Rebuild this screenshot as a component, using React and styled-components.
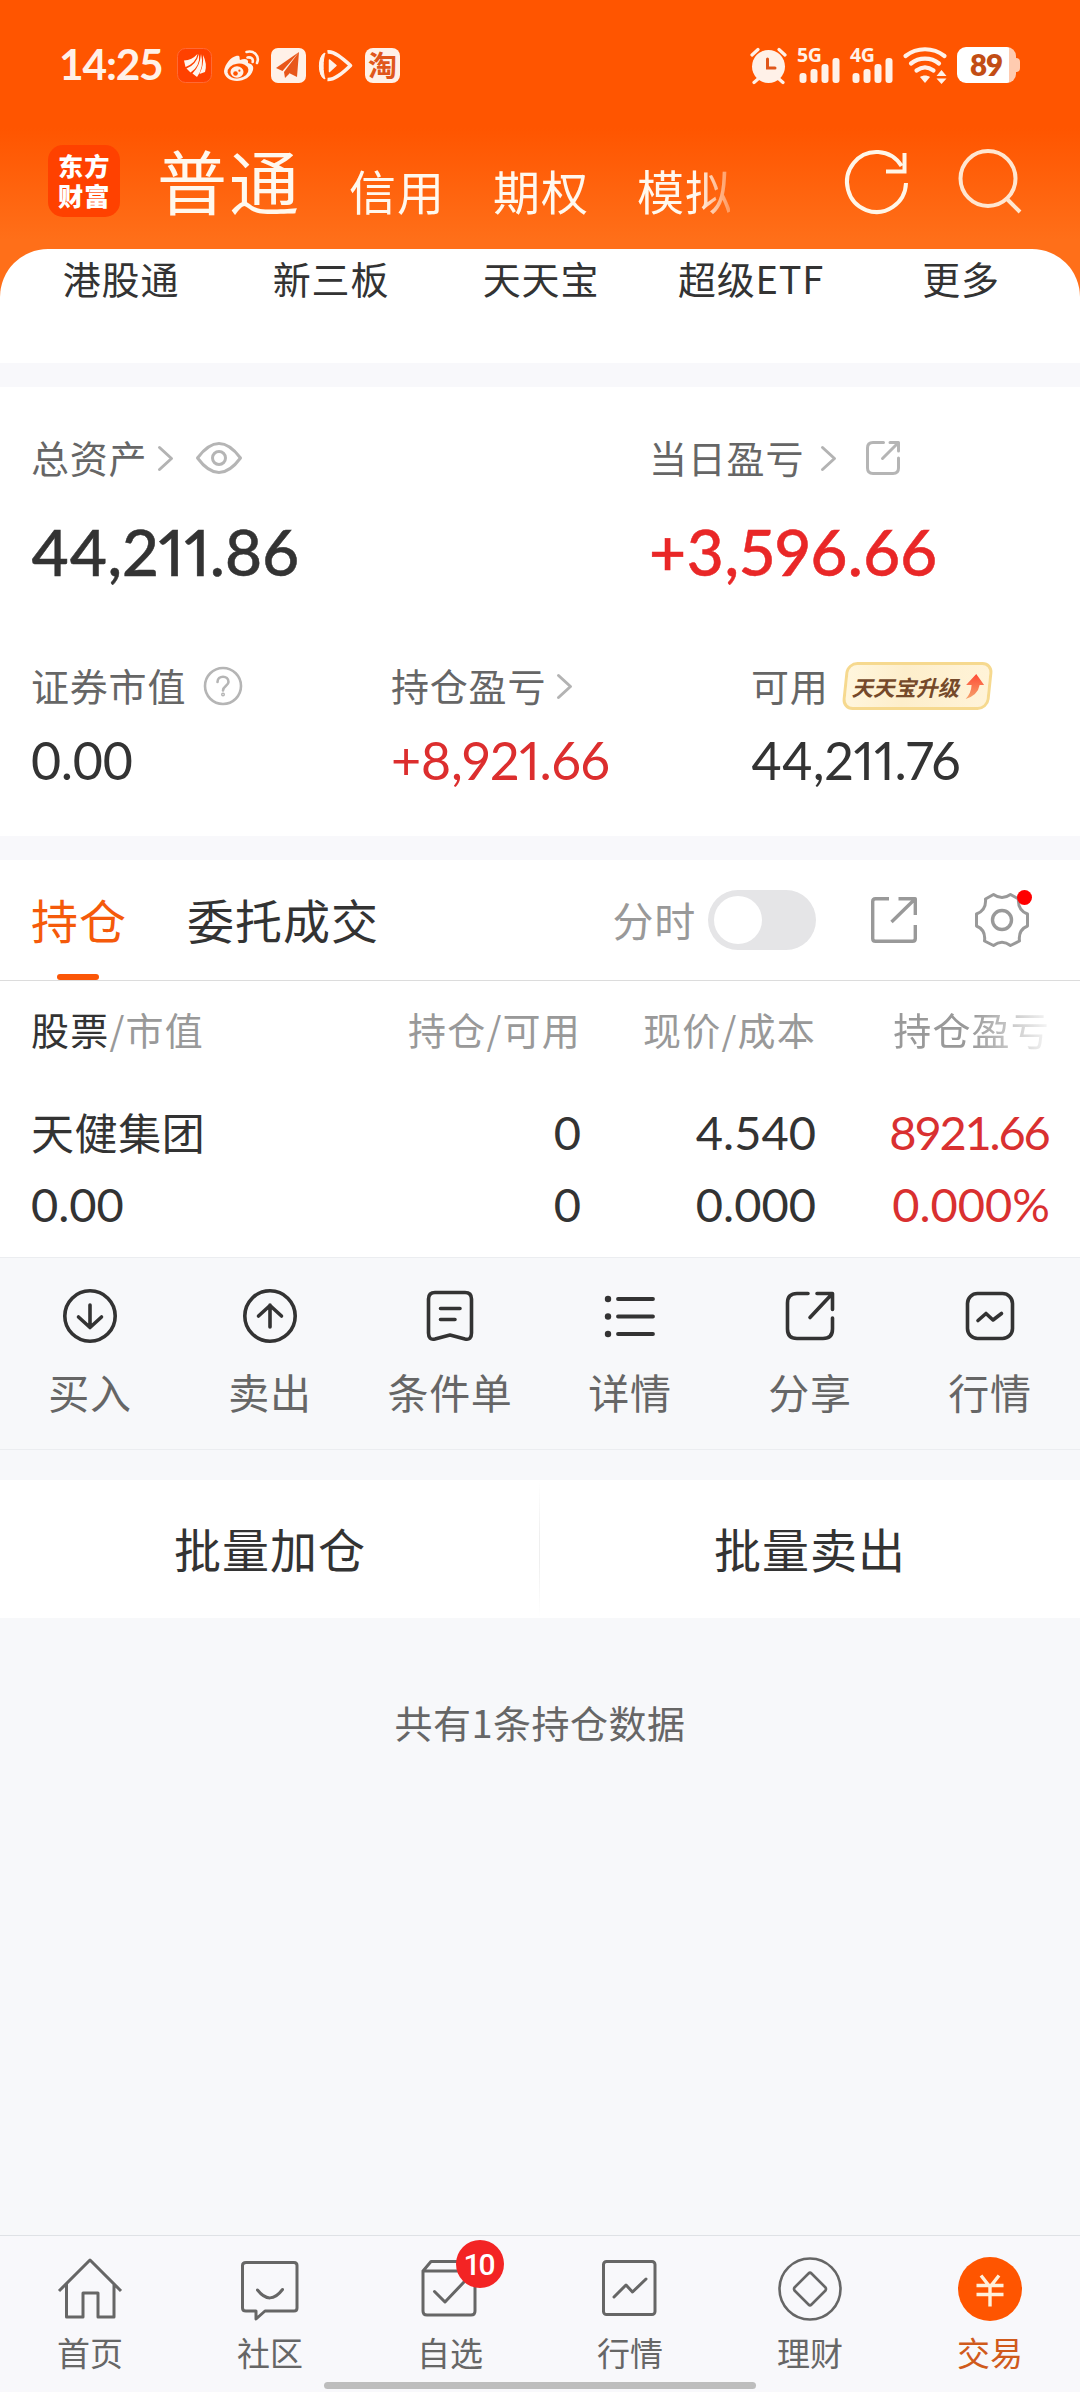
import React from 'react';
import styled, { createGlobalStyle, css } from 'styled-components';

const Global = createGlobalStyle`
  * { box-sizing: border-box; }
  body { margin: 0; background: #f7f8fa; }
  svg { display: block; flex: none; overflow: visible; }
`;

const cjk = `"Noto Sans CJK SC", "Noto Sans", sans-serif`;
const num = `Lato, "Noto Sans", "Noto Sans CJK SC", sans-serif`;

const Screen = styled.div`
  width: 1080px;
  height: 2392px;
  display: flex;
  flex-direction: column;
  overflow: hidden;
  background: #f7f8fa;
  color: #333;
  font-family: ${cjk};
  white-space: nowrap;
`;

const Top = styled.div`
  flex: none;
  background: linear-gradient(#ff5500 0, #ff5500 128px, #ff6f19 240px, #ff6f19 100%);
`;
const Header = styled.header`
  height: 249px;
  display: flex;
  flex-direction: column;
`;

const StatusBar = styled.div`
  height: 130px;
  padding: 0 60px 0 59px;
  display: flex;
  align-items: center;
`;
const Clock = styled.div`
  width: 118px;
  font: 700 42.5px/50px ${num};
  color: #fff1e8;
  letter-spacing: -1.2px;
  margin-top: -2px;
`;
const Apps = styled.div`
  display: flex;
  gap: 12px;
  flex: 1;
`;
const Tile = styled.span`
  width: 35px;
  height: 35px;
  border-radius: 8px;
  background: #fff1e8;
  color: #e0561a;
  font: 700 29px/33px ${cjk};
  text-align: center;
`;
const Indicators = styled.div`
  display: flex;
  align-items: center;
`;
const Signal = styled.div`
  width: 42px;
  height: 36px;
  margin-left: ${p => p.$gap}px;
  position: relative;
`;
const Net = styled.span`
  position: absolute;
  left: -2px;
  top: -2px;
  font: 700 19.5px/20px "Open Sans", sans-serif;
  letter-spacing: -0.5px;
  color: #fff1e8;
`;
const Battery = styled.div`
  width: 59px;
  height: 36px;
  margin-left: 9px;
  margin-right: 4px;
  padding-right: 1px;
  border-radius: 9px;
  background: linear-gradient(90deg, #fff 0 52px, #ffcbb0 52px);
  display: flex;
  justify-content: center;
  align-items: center;
  font: 800 29.5px/36px ${num};
  letter-spacing: -1px;
  color: #c24d14;
  position: relative;
  &::after {
    content: '';
    position: absolute;
    right: -4px;
    top: 11px;
    width: 4px;
    height: 14px;
    border-radius: 0 4px 4px 0;
    background: #ffcbb0;
  }
`;

const TitleBar = styled.div`
  height: 119px;
  padding: 15px 58px 0 48px;
  display: flex;
`;
const Logo = styled.div`
  width: 72px;
  height: 72px;
  border-radius: 15px;
  background: #ff4100;
  color: #fff;
  font: 900 25.2px/30px "Liberation Sans", "Noto Sans CJK SC", sans-serif;
  letter-spacing: 1px;
  padding: 7px 0 0 10px;
`;
const LogoLine = styled.span`
  display: block;
  height: 30px;
`;
const Modes = styled.nav`
  width: 573px;
  margin: -2px 0 0 37px;
  height: 90px;
  display: flex;
  align-items: baseline;
  color: #fff8ee;
  mask-image: linear-gradient(90deg, #000 540px, rgba(0, 0, 0, 0.35) 573px);
`;
const Mode = styled.span`
  font-size: ${p => (p.$active ? 70 : 47)}px;
  font-weight: 400;
  line-height: ${p => (p.$active ? 74 : 76)}px;
  letter-spacing: ${p => (p.$active ? 2 : 1)}px;
  margin-right: 48px;
`;
const HeadIcons = styled.div`
  display: flex;
  gap: 49px;
  margin-left: auto;
  padding-top: 4px;
`;

const Sheet = styled.section`
  height: 114px;
  background: #fff;
  border-radius: 48px 48px 0 0;
  padding: 0 14px 0 16px;
  display: grid;
  grid-template-columns: repeat(5, 210px);
  text-align: center;
  font-size: 38px;
  line-height: 58px;
  letter-spacing: 0.8px;
`;

const Gap = styled.div`
  flex: none;
  height: 24px;
  background: #f8f8fb;
`;

const Assets = styled.section`
  flex: none;
  height: 449px;
  background: #fff;
  padding: 42px 0 0 31px;
`;
const Columns = styled.div`
  display: grid;
  grid-template-columns: ${p => p.$cols};
`;
const Label = styled.div`
  display: flex;
  align-items: center;
  height: 58px;
  padding-bottom: 4px;
  font-size: 38px;
  letter-spacing: 0.8px;
  color: #666;
  & > svg { margin-top: 4px; }
`;
const Spacer = styled.i`
  flex: none;
  width: ${p => p.$w}px;
`;
const Amount = styled.div`
  font: 400 52px/66px ${num};
  letter-spacing: ${p => p.$track || 0}px;
  color: ${p => (p.$up ? '#dc2e2e' : '#333')};
  padding-top: 12px;
  ${p => p.$prop && css`font-feature-settings: "pnum";`}
  ${p => p.$big && css`
    font-size: 64px;
    font-weight: 500;
    line-height: 80px;
    padding-top: 25px;
    margin-bottom: 65px;
    color: ${p.$up ? '#e92727' : '#333'};
    -webkit-text-stroke: 0.5px currentColor;
  `}
`;
const Upgrade = styled.div`
  width: 147px;
  height: 48px;
  margin: 4px 0 0 15px;
  border: 3px solid #f6d98f;
  border-radius: 11px;
  background: linear-gradient(90deg, #fff6dd, #fdeecb 40%, #fff3d8);
  transform: skewX(-6deg);
  display: flex;
  align-items: center;
  padding-left: 7px;
  color: #75492a;
  font-size: 21.5px;
  font-weight: 700;
  letter-spacing: 0;
`;
const Slant = styled.span`
  transform: skewX(-8deg);
  margin-right: 3px;
`;

const TabRow = styled.div`
  flex: none;
  height: 121px;
  background: #fff;
  border-bottom: 1px solid #dcdcdc;
  padding: 0 51px 0 31px;
  display: flex;
  align-items: center;
`;
const Tab = styled.div`
  height: 120px;
  font-size: 47px;
  letter-spacing: 1px;
  line-height: 117px;
  margin-right: 60px;
  color: ${p => (p.$active ? '#f55a0a' : '#333')};
  position: relative;
  ${p => p.$active && css`
    &::after {
      content: '';
      position: absolute;
      left: 26px;
      bottom: 0;
      width: 42px;
      height: 6px;
      border-radius: 3px;
      background: #fb5607;
    }
  `}
`;
const Tools = styled.div`
  margin-left: auto;
  display: flex;
  align-items: center;
  color: #999;
  font-size: 41px;
`;
const ToolLabel = styled.span`
  letter-spacing: 0.8px;
  padding-bottom: 3px;
`;
const Toggle = styled.div`
  width: 108px;
  height: 60px;
  border-radius: 30px;
  padding: 6px;
  margin: 0 55px 0 12px;
  background: #e5e5e7;
`;
const Knob = styled.div`
  width: 48px;
  height: 48px;
  border-radius: 50%;
  background: #fff;
`;
const Gear = styled.div`
  position: relative;
  margin-left: 58px;
`;
const Dot = styled.i`
  position: absolute;
  right: -3px;
  top: -3px;
  width: 15px;
  height: 15px;
  border-radius: 50%;
  background: #ff0000;
`;

const Table = styled.div`
  flex: none;
  height: 276px;
  background: #fff;
  padding: 0 31px;
`;
const Row = styled.div`
  display: grid;
  grid-template-columns: 350px 200px 235px 234px;
  height: ${p => p.$h}px;
  line-height: ${p => p.$h}px;
  text-align: right;
  ${p => (p.$head
    ? css`font-size: 38px; letter-spacing: 1.2px; color: #999; margin-bottom: 19px;`
    : css`font-family: ${num}; font-size: 47px;`)}
  & > :first-child { text-align: left; }
`;
const Strong = styled.span`color: #333;`;
const Stock = styled.span`
  font: 400 43px/70px ${cjk};
  letter-spacing: 0.6px;
`;
const Cell = styled.span`
  color: ${p => (p.$up ? '#d93030' : 'inherit')};
  ${p => p.$tight && css`
    letter-spacing: -2.2px;
    margin-right: 1.4px;
  `}
`;
const Fade = styled.span`
  mask-image: linear-gradient(90deg, #000 0, #000 155px, rgba(0, 0, 0, 0.08) 234px);
`;

const Actions = styled.div`
  flex: none;
  height: 193px;
  border-top: 1px solid #ebedf0;
  border-bottom: 1px solid #ebedf0;
  display: grid;
  grid-template-columns: repeat(6, 180px);
  color: #333;
`;
const Action = styled.div`
  display: flex;
  flex-direction: column;
  align-items: center;
  padding-top: 31px;
  font-size: 41px;
  letter-spacing: 0.7px;
  color: #666;
  line-height: 60px;
  svg { color: #333; margin-bottom: 18px; }
`;

const Batch = styled.div`
  flex: none;
  height: 138px;
  margin-top: 30px;
  background: #fff;
  display: grid;
  grid-template-columns: 1fr 1fr;
  text-align: center;
  font-size: 47px;
  letter-spacing: 1px;
  line-height: 136px;
`;
const BatchButton = styled.div`
  background: ${p => (p.$line ? 'linear-gradient(#fff, #efefef 40%, #efefef 60%, #fff) right / 1px 100% no-repeat' : 'none')};
`;
const Summary = styled.div`
  margin-top: 74px;
  text-align: center;
  font-size: 38px;
  line-height: 60px;
  letter-spacing: 0.5px;
  color: #666;
`;

const NavBar = styled.nav`
  flex: none;
  height: 157px;
  margin-top: auto;
  border-top: 1px solid #dfe2e6;
  background: #f8f8fb;
  display: grid;
  grid-template: 145px 12px / repeat(6, 180px);
`;
const NavItem = styled.div`
  display: flex;
  flex-direction: column;
  align-items: center;
  padding-top: 21px;
  color: ${p => (p.$active ? '#d05a1c' : '#666')};
  font-size: 33px;
  line-height: 46px;
  position: relative;
  svg { margin-bottom: 8px; }
`;
const Count = styled.span`
  position: absolute;
  left: 96px;
  top: 4px;
  width: 48px;
  height: 48px;
  border-radius: 50%;
  background: #f32424;
  color: #fff;
  text-align: center;
  font: 500 30px/49px Roboto, sans-serif;
  letter-spacing: -2px;
  text-indent: -3px;
`;
const HomeBar = styled.div`
  grid-column: 1 / -1;
  justify-self: center;
  align-self: start;
  margin-top: 1px;
  width: 432px;
  height: 7px;
  border-radius: 4px;
  background: #bdbdbd;
`;

const Svg = ({ w = 64, h = w, s = 3, children }) => (
  <svg width={w} height={h} viewBox={`0 0 ${w} ${h}`} fill="none" stroke="currentColor"
    strokeWidth={s} strokeLinecap="round" strokeLinejoin="round">{children}</svg>
);

const Chevron = () => <Svg w={15} h={25}><g stroke="#b3b3b3"><path d="M1.500 1.500 13.500 12.500 1.500 23.500" /></g></Svg>;

const EastMoneyIcon = () => (
  <svg width="35" height="35" viewBox="0 0 35 35">
    <rect x=".5" y=".5" width="34" height="34" rx="8" fill="#ff4100" stroke="#ff6a35" />
    <g fill="#fff6ee">
      <path d="M7 12.500Q15 12 20.500 6 19 15 8.500 19Z" />
      <path d="M9.500 20.500Q19 17 22 6 23.500 18 13.500 24.500Z" />
      <path d="M15.500 25.500Q23 18 24 6 27.500 19 20 29Z" />
      <path d="M22.500 26Q27 17 26 7 30.500 16 28 24Z" />
    </g>
  </svg>
);
const WeiboIcon = () => (
  <svg width="35" height="35" viewBox="0 0 35 35" fill="none" stroke="#fff1e8">
    <path d="M12 8C17 7 15 10 16 12 21 10 25 11 24 15 28 16 30 18 29 22 27 29 20 33 13 33 6 33 0 29 0 23 1 16 7 9 12 8Z" fill="#fff1e8" stroke="none" />
    <ellipse cx="14" cy="23" rx="10.500" ry="7.300" fill="#ff5500" stroke="none" transform="rotate(-8 14 23)" />
    <ellipse cx="13" cy="24" rx="6.500" ry="5.700" fill="#fff1e8" stroke="none" />
    <circle cx="11.500" cy="25.500" r="2.300" fill="#ff5500" stroke="none" /><circle cx="15.400" cy="22.700" r="1.100" fill="#ff5500" stroke="none" />
    <path d="M22.500 4C30 2 36 8 33 15M23.500 9.500C27 8.700 29.500 11 28.700 14" strokeWidth="2.600" strokeLinecap="round" />
  </svg>
);
const PlaneIcon = () => (
  <svg width="35" height="35" viewBox="0 0 35 35">
    <rect width="35" height="35" rx="7" fill="#fff1e8" />
    <path d="M28 4 5 20 11.500 23ZM28 4 13 24 14 30 18 26ZM28 4 18 25 26 29Z" fill="#e8571a" />
  </svg>
);
const PlayIcon = () => (
  <svg width="35" height="35" viewBox="0 0 35 35" fill="none" stroke="#fff1e8" strokeLinejoin="round">
    <path d="M9.500 4C16 3 24 10 32.500 17.500 25 25 17 32 9.500 31.500" strokeWidth="3.600" />
    <path d="M7 5C4.500 12 4.500 24 7 31-.5 29-.5 7 7 5Z" fill="#fff1e8" strokeWidth="1" />
    <path d="M11.500 12 18 17.500 11.500 23.500Z" fill="#fff1e8" strokeWidth="1.500" />
  </svg>
);
const AlarmIcon = () => (
  <svg width="37" height="37" viewBox="0 0 37 37" fill="none" stroke="#fff1e8" strokeLinecap="round">
    <circle cx="18.500" cy="19.500" r="16.500" fill="#fff1e8" stroke="none" />
    <path d="M2 8 8 2.500M29 2.500 35 8M8 32 4 35.500M29 32 33 35.500" strokeWidth="3.200" />
    <path d="M17.500 12V21H25" stroke="#e0561a" strokeWidth="3" />
  </svg>
);
const Bars = () => (
  <svg width="42" height="36" viewBox="0 0 42 36" fill="#fff1e8">
    <rect x="0.500" y="26" width="7" height="10" rx="3" /><rect x="11.500" y="22" width="7" height="14" rx="3" />
    <rect x="22.500" y="17" width="7" height="19" rx="3" /><rect x="33.500" y="11" width="7" height="25" rx="3" />
  </svg>
);
const WifiIcon = () => (
  <svg width="45" height="37" viewBox="0 0 45 37" fill="none" stroke="#fff1e8" strokeWidth="4.200" strokeLinecap="round">
    <path d="M2.500 9C14 0 30 0 41.500 9M8 16.500C16 10 28 10 36 16.500M13.500 23.500C19 19.500 25 19.500 30.500 23.500" />
    <path d="M17 30C20 28 24 28 27 30L22 36Z" fill="#fff1e8" stroke="none" />
    <path d="M33.500 29 38.500 23 43.500 29ZM33.500 31.500H43.500L38.500 37Z" fill="#fff1e8" stroke="none" />
  </svg>
);

const ActionIcons = {
  buy: <Svg w={54} s={3.6}><circle cx="27" cy="27" r="25.200" /><path d="M27 16V38M15.500 28 27 38.500 38.500 28" /></Svg>,
  sell: <Svg w={54} s={3.6}><circle cx="27" cy="27" r="25.200" /><path d="M27 38V16M15.500 27 27 16.500 38.500 27" /></Svg>,
  order: <Svg w={54} s={3.6}><path d="M12 3.500H42Q48.500 3.500 48.500 10V44Q48.500 51.500 42 50L27 46 12 50Q5.500 51.500 5.500 44V10Q5.500 3.500 12 3.500ZM17.500 19.500H37M17.500 30.500H32" /></Svg>,
  detail: <Svg w={54} s={3.8}><path d="M15 10H50M15 27.500H50M15 45H50" /><g fill="currentColor" stroke="none"><circle cx="5" cy="10" r="3.200" /><circle cx="5" cy="27.500" r="3.200" /><circle cx="5" cy="45" r="3.200" /></g></Svg>,
  share: <Svg w={54} s={3.6}><path d="M25 4.500H14Q4.500 4.500 4.500 14V40Q4.500 49.500 14 49.500H40Q49.500 49.500 49.500 40V29M34 4.500H49.500V20.500M49 5 27 28.500" /></Svg>,
  quote: <Svg w={54} s={3.6}><rect x="4.500" y="4.500" width="45" height="45" rx="10" /><path d="M15 31.500 23 24.500 30 31 38.500 24.500" /></Svg>,
};

const NavIcons = {
  home: <Svg><path d="M1 34 32 3 63 34M8.500 27V60H25V36H40V60H56V27" strokeLinecap="butt" /></Svg>,
  chat: <Svg><path d="M8 5.500H56Q59 5.500 59 8.500V51Q59 54 56 54H27L18 62V54H8Q4.500 54 4.500 51V8.500Q4.500 5.500 8 5.500ZM19.500 33Q32 49 44.500 32.500" /></Svg>,
  pick: <Svg><path d="M5 14V54Q5 58 9 58H53Q57 58 57 54V14ZM5 14 13 4.500H50L57 14M16.500 34.500 27 45 46 25" /></Svg>,
  market: <Svg><rect x="5.500" y="4.500" width="51.500" height="53" rx="3" /><path d="M16 40 28 28 34.500 35 48 22" /></Svg>,
  wealth: <Svg s={2.6}><circle cx="32" cy="32" r="30.500" /><path d="M30.500 16.500Q32 15 33.500 16.500L47.500 30.500Q48.500 32 47.500 33.500L33.500 47.500Q32 49 30.500 47.500L16.500 33.500Q15.500 32 16.500 30.500Z" /></Svg>,
  trade: <svg width="64" height="64" viewBox="0 0 64 64" fill="none" stroke="#fff0da" strokeWidth="3.400"><circle cx="32" cy="32" r="32" fill="#ff5500" stroke="none" /><path d="M23 18.500 32 30 41 18.500M18.500 28.500H45.500M18.500 37.500H45.500M32 29V49.500" /></svg>,
};

const actions = [['buy', '买入'], ['sell', '卖出'], ['order', '条件单'], ['detail', '详情'], ['share', '分享'], ['quote', '行情']];
const navs = [['home', '首页'], ['chat', '社区'], ['pick', '自选', '10'], ['market', '行情'], ['wealth', '理财'], ['trade', '交易']];

export default function App() {
  return (
    <Screen>
      <Global />
      <Top>
        <Header>
          <StatusBar>
            <Clock>14:25</Clock>
            <Apps>
              <EastMoneyIcon /><WeiboIcon /><PlaneIcon /><PlayIcon /><Tile>淘</Tile>
            </Apps>
            <Indicators>
              <AlarmIcon />
              <Signal $gap={12}><Net>5G</Net><Bars /></Signal>
              <Signal $gap={11}><Net>4G</Net><Bars /></Signal>
              <Spacer $w={9} />
              <WifiIcon />
              <Battery>89</Battery>
            </Indicators>
          </StatusBar>
          <TitleBar>
            <Logo><LogoLine>东方</LogoLine><LogoLine>财富</LogoLine></Logo>
            <Modes>
              <Mode $active>普通</Mode><Mode>信用</Mode><Mode>期权</Mode><Mode>模拟</Mode>
            </Modes>
            <HeadIcons>
              <svg width="64" height="64" viewBox="0 0 64 64" fill="none" stroke="#fff6e8" strokeWidth="4"><path d="M61 34A29.500 30 0 1 1 56.500 17M59.500 4V22.500H41" /></svg>
              <svg width="64" height="64" viewBox="0 0 64 64" fill="none" stroke="#ffe6d0" strokeWidth="4"><circle cx="30" cy="29.500" r="27.500" /><path d="M49 50 62 63" /></svg>
            </HeadIcons>
          </TitleBar>
        </Header>
        <Sheet>
          <span>港股通</span><span>新三板</span><span>天天宝</span><span>超级ETF</span><span>更多</span>
        </Sheet>
      </Top>
      <Gap />
      <Assets>
        <Columns $cols="618px 1fr">
          <div>
            <Label>总资产<Spacer $w={11} /><Chevron /><Spacer $w={23} />
              <Svg w={46} h={32}><g stroke="#b5b5b5"><path d="M1.500 16Q23-13 44.500 16 23 45 1.500 16Z" /><circle cx="23" cy="16" r="6.500" /></g></Svg>
            </Label>
            <Amount $big $prop>44,211.86</Amount>
          </div>
          <div>
            <Label>当日盈亏<Spacer $w={17} /><Chevron /><Spacer $w={30} />
              <Svg w={34} h={34}><g stroke="#b5b5b5"><path d="M17.500 1.500H7Q1.500 1.500 1.500 7V27Q1.500 32.500 7 32.500H27Q32.500 32.500 32.500 27V17M24 1.500H32.500V10M32 2 16.500 17.500" /></g></Svg>
            </Label>
            <Amount $big $prop $up $track={0.7}>+3,596.66</Amount>
          </div>
        </Columns>
        <Columns $cols="360px 360px 1fr">
          <div>
            <Label>证券市值<Spacer $w={17} />
              <Svg w={40}><g stroke="#b5b5b5" strokeWidth="2.600"><circle cx="20" cy="20" r="18" /><path d="M14.500 16C14.500 9 25.500 9 25.500 16 25.500 19.500 20 20 20 24.500" /><circle cx="20" cy="28.500" r=".7" /></g></Svg>
            </Label>
            <Amount $track={-0.3}>0.00</Amount>
          </div>
          <div>
            <Label>持仓盈亏<Spacer $w={11} /><Chevron /></Label>
            <Amount $up $prop $track={-0.3}>+8,921.66</Amount>
          </div>
          <div>
            <Label>可用
              <Upgrade><Slant>天天宝升级</Slant>
                <svg width="19" height="25" viewBox="0 0 19 25"><defs><linearGradient id="up" x1="0" y1="0" x2="0" y2="1"><stop offset="0" stopColor="#ff4a35" /><stop offset="1" stopColor="#f5a36c" /></linearGradient></defs><path d="M10 0 19 11H14.500Q14 21 2 25 7 19 6.500 11H1Z" fill="url(#up)" /></svg>
              </Upgrade>
            </Label>
            <Amount $prop $track={-0.2}>44,211.76</Amount>
          </div>
        </Columns>
      </Assets>
      <Gap />
      <TabRow>
        <Tab $active>持仓</Tab>
        <Tab>委托成交</Tab>
        <Tools>
          <ToolLabel>分时</ToolLabel>
          <Toggle><Knob /></Toggle>
          <Svg w={46} s={3.4}><path d="M18 1.700H4.500Q1.700 1.700 1.700 4.500V41.500Q1.700 44.300 4.500 44.300H41.500Q44.300 44.300 44.300 41.500V28M27.500 1.700H44.300V18M43.500 2.500 20.500 25" strokeLinecap="butt" /></Svg>
          <Gear>
            <Svg w={54}><path d="M18.500 1.500Q27 7.500 35.500 1.500L43.500 6Q42.500 17 52.500 21V33Q43 37 44.500 48L35.500 52.500Q27 46 18.500 52.500L9.500 48Q11 37 1.500 33V21Q11.500 17 10.500 6Z" /><circle cx="27" cy="27" r="9.500" strokeWidth="3.400" /></Svg>
            <Dot />
          </Gear>
        </Tools>
      </TabRow>
      <Table>
        <Row $head $h={96}>
          <span><Strong>股票</Strong>/市值</span><span>持仓/可用</span><span>现价/成本</span><Fade>持仓盈亏</Fade>
        </Row>
        <Row $h={72}>
          <Stock>天健集团</Stock><Cell>0</Cell><Cell>4.540</Cell><Cell $up $tight>8921.66</Cell>
        </Row>
        <Row $h={72}>
          <Cell>0.00</Cell><Cell>0</Cell><Cell>0.000</Cell><Cell $up>0.000%</Cell>
        </Row>
      </Table>
      <Actions>
        {actions.map(([icon, text]) => <Action key={icon}>{ActionIcons[icon]}{text}</Action>)}
      </Actions>
      <Batch>
        <BatchButton $line>批量加仓</BatchButton>
        <BatchButton>批量卖出</BatchButton>
      </Batch>
      <Summary>共有1条持仓数据</Summary>
      <NavBar>
        {navs.map(([icon, text, count]) => (
          <NavItem key={icon} $active={icon === 'trade'}>
            {NavIcons[icon]}{text}{count && <Count>{count}</Count>}
          </NavItem>
        ))}
        <HomeBar />
      </NavBar>
    </Screen>
  );
}
